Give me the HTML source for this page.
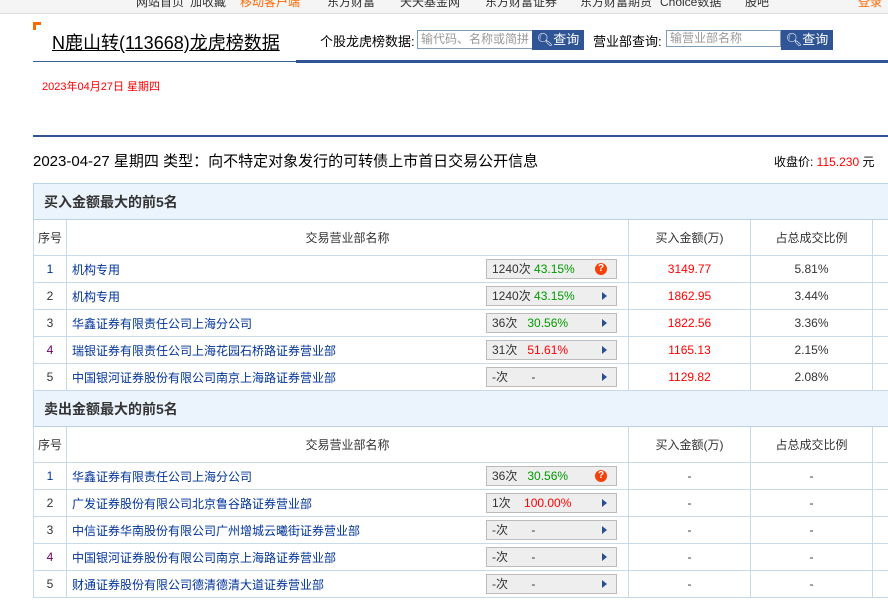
<!DOCTYPE html>
<html><head><meta charset="utf-8"><style>
*{margin:0;padding:0;box-sizing:border-box}
body{width:888px;height:600px;overflow:hidden;background:#fff;font-family:"Liberation Sans","Noto Sans CJK SC",sans-serif;font-size:12px;color:#333;position:relative}
.a{position:absolute;white-space:nowrap}
.nav{position:absolute;left:0;top:0;width:888px;height:14px;background:#f5f5f5;border-bottom:1px solid #ddd;overflow:hidden}
.nav span{position:absolute;top:-7px;font-size:12px;color:#333}
table{position:absolute;left:33px;width:855px;border-collapse:collapse;table-layout:fixed}
td{border:1px solid #c8d9ea;height:27px;font-size:12px;text-align:center;padding:0}
.sec td{height:36px;background:#ebf4fd;text-align:left;padding-left:10px;font-size:14px;font-weight:bold;color:#333;border-color:#b9d1ea}
.hd td{height:36px;color:#333}
td.n{text-align:left;padding-left:5px;position:relative}
td.n a{color:#003399;text-decoration:none}
.box{position:absolute;left:419px;top:3px;width:131px;height:20px;background:#eee;border:1px solid #bbb;text-align:left;padding-left:5px;line-height:18px;color:#333}
.box i{font-style:normal}
.g{color:#090}.r{color:#f00}
.tri{position:absolute;right:9px;top:5px;width:0;height:0;border-left:5px solid #2b4f8c;border-top:4.5px solid transparent;border-bottom:4.5px solid transparent}
.q{position:absolute;right:9px;top:3px;width:12px;height:12px;border-radius:50%;background:#f5420b;color:#fff;font-size:10px;font-weight:bold;line-height:12px;text-align:center}
.red{color:#f00}
</style></head><body>
<div class="nav">
<span style="left:136px">网站首页</span><span style="left:190px">加收藏</span><span style="left:240px;color:#f60">移动客户端</span><span style="left:327px">东方财富</span><span style="left:400px">天天基金网</span><span style="left:485px">东方财富证券</span><span style="left:580px">东方财富期货</span><span style="left:660px">Choice数据</span><span style="left:745px">股吧</span><span style="left:858px;color:#f60">登录</span>
</div>
<div class="a" style="left:33px;top:22px;width:8px;height:8px;border-left:3px solid #f60;border-top:3px solid #f60"></div>
<div class="a" style="left:52px;top:29px;font-size:18px;color:#000;text-decoration:underline">N鹿山转(113668)<span style="text-decoration:none">龙虎榜数据</span></div>
<div class="a" style="left:33px;top:61px;width:263px;height:1px;background:#3b5f96"></div>
<div class="a" style="left:296px;top:60px;width:592px;height:3px;background:#2f5596"></div>
<div class="a" style="left:320px;top:31px;font-size:13px;color:#000">个股龙虎榜数据:</div>
<div class="a" style="left:417px;top:30px;width:116px;height:19px;border:1px solid #7f9db9;color:#999;font-size:12px;line-height:17px;padding-left:3px;overflow:hidden">输代码、名称或简拼</div>
<div class="a" style="left:532px;top:30px;width:52px;height:20px;background:#2f5596;color:#fff;font-size:13px;line-height:20px;text-align:center">&#x1F50D;&#xFE0E;查询</div>
<div class="a" style="left:593px;top:31px;font-size:13px;color:#000">营业部查询:</div>
<div class="a" style="left:666px;top:30px;width:115px;height:17px;border:1px solid #7f9db9;color:#999;font-size:12px;line-height:15px;padding-left:3px">输营业部名称</div>
<div class="a" style="left:781px;top:30px;width:52px;height:20px;background:#2f5596;color:#fff;font-size:13px;line-height:20px;text-align:center">&#x1F50D;&#xFE0E;查询</div>
<div class="a" style="left:42px;top:78px;font-size:11px;color:#f00">2023年04月27日 星期四</div>
<div class="a" style="left:33px;top:135px;width:855px;height:2px;background:#2f5596"></div>
<div class="a" style="left:33px;top:150px;font-size:15px;color:#000">2023-04-27 星期四 类型：向不特定对象发行的可转债上市首日交易公开信息</div>
<div class="a" style="left:774px;top:153px;font-size:12px;color:#000">收盘价: <span class="red">115.230</span> 元</div>

<table style="top:183px">
<colgroup><col style="width:33px"><col style="width:562px"><col style="width:122px"><col style="width:122px"><col style="width:16px"></colgroup>
<tr class="sec"><td colspan="5">买入金额最大的前5名</td></tr>
<tr class="hd"><td>序号</td><td>交易营业部名称</td><td>买入金额(万)</td><td>占总成交比例</td><td></td></tr>
<tr><td style="color:#039">1</td><td class="n"><a>机构专用</a><div class="box">1240次 <i class="g">43.15%</i><span class="q">?</span></div></td><td class="red">3149.77</td><td>5.81%</td><td></td></tr>
<tr><td>2</td><td class="n"><a>机构专用</a><div class="box">1240次 <i class="g">43.15%</i><span class="tri"></span></div></td><td class="red">1862.95</td><td>3.44%</td><td></td></tr>
<tr><td>3</td><td class="n"><a>华鑫证券有限责任公司上海分公司</a><div class="box">36次 &nbsp;&nbsp;<i class="g">30.56%</i><span class="tri"></span></div></td><td class="red">1822.56</td><td>3.36%</td><td></td></tr>
<tr><td style="color:#606">4</td><td class="n"><a>瑞银证券有限责任公司上海花园石桥路证券营业部</a><div class="box">31次 &nbsp;&nbsp;<i class="r">51.61%</i><span class="tri"></span></div></td><td class="red">1165.13</td><td>2.15%</td><td></td></tr>
<tr><td>5</td><td class="n"><a>中国银河证券股份有限公司南京上海路证券营业部</a><div class="box">-次 &nbsp;&nbsp;&nbsp;&nbsp;&nbsp;&nbsp;-<span class="tri"></span></div></td><td class="red">1129.82</td><td>2.08%</td><td></td></tr>
<tr class="sec"><td colspan="5">卖出金额最大的前5名</td></tr>
<tr class="hd"><td>序号</td><td>交易营业部名称</td><td>买入金额(万)</td><td>占总成交比例</td><td></td></tr>
<tr><td style="color:#039">1</td><td class="n"><a>华鑫证券有限责任公司上海分公司</a><div class="box">36次 &nbsp;&nbsp;<i class="g">30.56%</i><span class="q">?</span></div></td><td>-</td><td>-</td><td></td></tr>
<tr><td>2</td><td class="n"><a>广发证券股份有限公司北京鲁谷路证券营业部</a><div class="box">1次 &nbsp;&nbsp;&nbsp;<i class="r">100.00%</i><span class="tri"></span></div></td><td>-</td><td>-</td><td></td></tr>
<tr><td>3</td><td class="n"><a>中信证券华南股份有限公司广州增城云曦街证券营业部</a><div class="box">-次 &nbsp;&nbsp;&nbsp;&nbsp;&nbsp;&nbsp;-<span class="tri"></span></div></td><td>-</td><td>-</td><td></td></tr>
<tr><td style="color:#606">4</td><td class="n"><a>中国银河证券股份有限公司南京上海路证券营业部</a><div class="box">-次 &nbsp;&nbsp;&nbsp;&nbsp;&nbsp;&nbsp;-<span class="tri"></span></div></td><td>-</td><td>-</td><td></td></tr>
<tr><td>5</td><td class="n"><a>财通证券股份有限公司德清德清大道证券营业部</a><div class="box">-次 &nbsp;&nbsp;&nbsp;&nbsp;&nbsp;&nbsp;-<span class="tri"></span></div></td><td>-</td><td>-</td><td></td></tr>
</table>
</body></html>
